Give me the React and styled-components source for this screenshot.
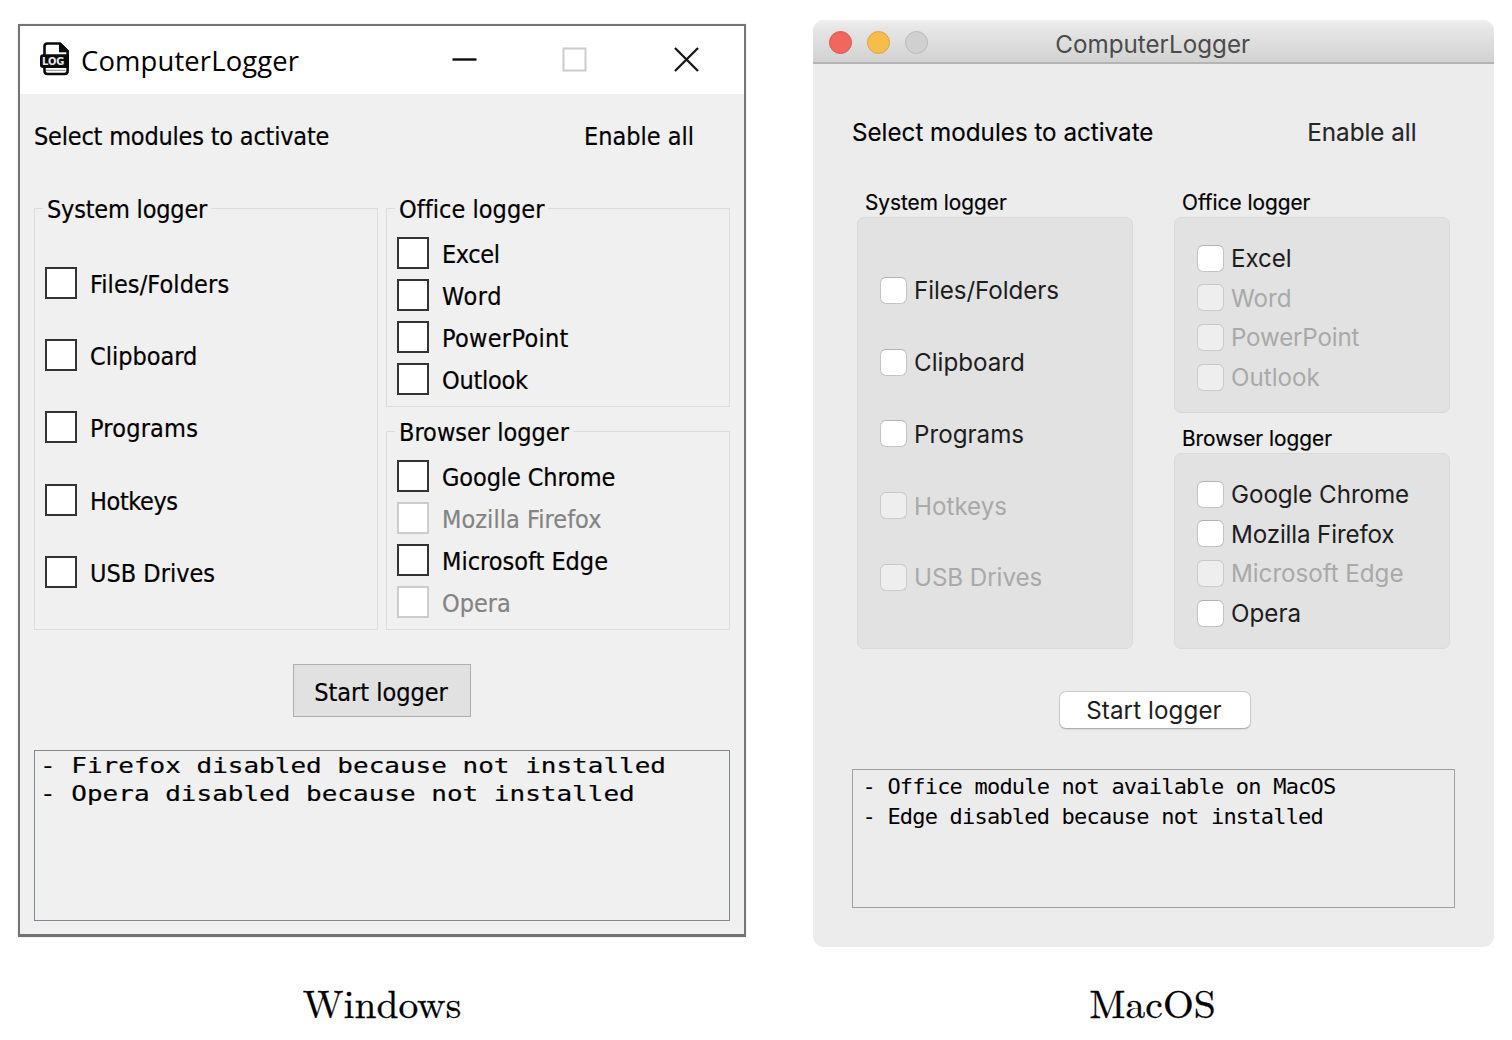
import React from 'react';
import styled, { createGlobalStyle, css } from 'styled-components';

const GlobalStyle = createGlobalStyle`
  *, *::before, *::after { box-sizing: border-box; }
  body { margin: 0; background: #fff; }
`;

const Page = styled.main`
  display: flex;
  align-items: flex-start;
  gap: 67px;
  width: 1512px;
  height: 1040px;
  padding-left: 18px;
  overflow: hidden;
`;

const Figure = styled.figure`
  display: flex;
  flex-direction: column;
  align-items: center;
  margin: 0;
  padding-top: ${(p) => p.$top}px;
`;

const Caption = styled.figcaption`
  margin-top: ${(p) => p.$gap}px;
  padding-right: ${(p) => p.$shift || 0}px;
  font: 39.6px/50px "Latin Modern Roman", "CMU Serif", "Liberation Serif", serif;
  color: #000;
  -webkit-text-stroke: 0.3px #000;
  white-space: nowrap;
`;

const Label = styled.span`
  letter-spacing: ${(p) => p.$track || 0}px;
  white-space: nowrap;
`;

/* ---------- Windows ---------- */

const WinFrame = styled.section`
  width: 728px;
  height: 913px;
  border: 2px solid #747474;
  border-left-width: 2.5px;
  border-bottom-width: 3px;
  background: #f0f0f0;
  color: #000;
  font: 25px/30px "DejaVu Sans Condensed", "DejaVu Sans", sans-serif;
  -webkit-text-stroke: 0.2px currentColor;
  box-shadow: 0 0 2px rgba(0, 0, 0, 0.12);
`;

const WinTitleBar = styled.header`
  display: flex;
  align-items: center;
  height: 68px;
  padding: 0 45px 0 19px;
  background: #fff;
  svg { margin-top: -2px; }
`;

const WinTitle = styled.h1`
  flex: 1;
  margin: 2px 0 0 11px;
  font: 400 27.4px/34px "Open Sans", "Noto Sans", sans-serif;
  letter-spacing: 0.15px;
  -webkit-text-stroke: 0;
`;

const WinControls = styled.div`
  display: flex;
  align-items: center;
  gap: 85px;
  svg { display: block; }
  svg + svg + svg { margin-left: 2px; }
`;

const WinBody = styled.div`
  display: flex;
  flex-direction: column;
  padding: 0 14px;
`;

const WinHeader = styled.div`
  display: flex;
  align-items: center;
  justify-content: space-between;
  height: 86px;
  margin-bottom: 28px;
  padding-right: 36px;
`;

const WinGroups = styled.div`
  display: grid;
  grid-template-columns: 344px 344px;
  gap: 8px;
  height: 422px;
`;

const WinColumn = styled.div`
  display: grid;
  grid-template-rows: 199px 199px;
  gap: 24px;
`;

const WinGroup = styled.section`
  border: 1px solid #dcdcdc;
  padding: 0 8px;
`;

const WinLegend = styled.h2`
  width: fit-content;
  height: 30px;
  margin: -15px 0 ${(p) => (p.$roomy ? 23 : 8)}px;
  padding: 1px 4px 0;
  background: #f0f0f0;
  font: inherit;
`;

const WinRow = styled.label`
  display: flex;
  align-items: center;
  gap: 13px;
  height: ${(p) => (p.$roomy ? 72.2 : 42.15)}px;
  padding-left: 2px;
  color: ${(p) => (p.$off ? '#838383' : '#000')};
  ${Label} { padding-top: 4px; }
`;

const WinBox = styled.span`
  width: 32px;
  height: 32px;
  border: 2px solid ${(p) => (p.$off ? '#cccccc' : '#333333')};
  background: #fff;
`;

const WinButton = styled.button`
  align-self: center;
  width: 178px;
  height: 53px;
  margin: 34px 0 33px;
  padding: 4px 2px 0 0;
  border: 1px solid #adadad;
  background: #e1e1e1;
  color: #000;
  font: inherit;
`;

const WinLog = styled.div`
  height: 171px;
  padding: 1px 5px;
  border: 1px solid #828790;
  overflow: hidden;
`;

const WinLogLine = styled.p`
  width: fit-content;
  margin: 0;
  font: 21.5px/28px "DejaVu Sans Mono", monospace;
  white-space: pre;
  transform: scaleX(1.209);
  transform-origin: 0 50%;
`;

/* ---------- macOS ---------- */

const MacFrame = styled.section`
  width: 681px;
  height: 927px;
  border-radius: 11px;
  background: #ececec;
  color: #000;
  font: 24.2px/30px Inter, sans-serif;
  overflow: hidden;
`;

const MacTitleBar = styled.header`
  display: grid;
  grid-template-columns: 1fr auto 1fr;
  align-items: center;
  height: 44px;
  padding: 3px 17px 0 15.5px;
  border-bottom: 2px solid #b4b4b4;
  background: linear-gradient(#f0f0f0, #e6e6e6 20%, #d2d2d2);
`;

const Lights = styled.div`
  display: flex;
  gap: 15px;
`;

const lightColors = {
  close: css`background: #f0675d; border-color: #dc564c;`,
  minimise: css`background: #f6bd4b; border-color: #e0a33a;`,
  zoom: css`background: #d0d0d0; border-color: #b9b9b9;`,
};

const Light = styled.span`
  width: 23px;
  height: 23px;
  border: 1px solid;
  border-radius: 50%;
  ${(p) => lightColors[p.$kind]}
`;

const MacTitle = styled.h1`
  margin: 0;
  padding-top: 4px;
  color: #4b4b4b;
  font: inherit;
`;

const MacBody = styled.div`
  display: flex;
  flex-direction: column;
  padding: 0 39px;
`;

const MacHeader = styled.div`
  display: flex;
  align-items: center;
  justify-content: space-between;
  height: 84px;
  margin: 27px 0 13px;
  padding-right: 38.5px;
  -webkit-text-stroke: 0.15px currentColor;
`;

const MacEnable = styled.span`
  color: #262626;
`;

const MacGroups = styled.div`
  display: grid;
  grid-template-columns: 276px 276px;
  gap: 41px;
  margin-left: 5px;
`;

const MacColumn = styled.div`
  display: flex;
  flex-direction: column;
`;

const MacLegend = styled.h2`
  height: 29px;
  margin: ${(p) => p.$top || 0}px 0 0;
  padding-left: 8px;
  font: 400 20.8px/29px Inter, sans-serif;
  -webkit-text-stroke: 0.2px currentColor;
`;

const MacGroup = styled.section`
  height: ${(p) => (p.$tall ? 432 : 196)}px;
  padding: ${(p) => (p.$tall ? 36.5 : 20.5)}px 22px 0;
  border: 1px solid #d9d9d9;
  border-radius: 7px;
  background: #e2e2e2;
`;

const MacRow = styled.label`
  display: flex;
  align-items: center;
  gap: 7px;
  height: ${(p) => (p.$roomy ? 71.75 : 39.6)}px;
  color: ${(p) => (p.$off ? '#a9a9a9' : '#1d1d1d')};
  ${Label} { padding-top: 2px; }
`;

const MacBox = styled.span`
  width: 27px;
  height: 27px;
  border: 1px solid ${(p) => (p.$off ? '#cbcbcb' : '#c3c3c3')};
  border-top-color: ${(p) => (p.$off ? '#c6c6c6' : '#b2b2b2')};
  border-radius: 6px;
  background: ${(p) => (p.$off ? '#eeeeee' : '#ffffff')};
`;

const MacButton = styled.button`
  width: 192px;
  height: 38px;
  margin: 42px 0 40px 206.5px;
  padding: 1px 1px 0 0;
  border: 1px solid #c9c9c9;
  border-bottom-color: #b0b0b0;
  border-radius: 7px;
  background: #fff;
  box-shadow: 0 1px 1px rgba(0, 0, 0, 0.08);
  color: #1d1d1d;
  font: inherit;
  letter-spacing: 0.08px;
`;

const MacLog = styled.div`
  height: 139px;
  padding: 2px 9.5px;
  border: 1.5px solid #a0a0a0;
  overflow: hidden;
`;

const MacLogLine = styled.p`
  margin: 0;
  font: 22px/30px "DejaVu Sans Mono", monospace;
  letter-spacing: -0.8px;
  white-space: pre;
`;

/* ---------- Icons ---------- */

const LogIcon = () => (
  <svg width="31" height="34" viewBox="0 0 31 34">
    <path d="M7.500 1.500H21l7.600 7.600V29q0 3-3 3H8.500q-3 0-3-3V4.500q0-3 3-3Z" fill="#fff" stroke="#0a0a0a" strokeWidth="2.600" />
    <path d="M20 1v9.300h9.500V8.500L22 1Z" fill="#0a0a0a" />
    <path d="M4 12.200H30V26H4q-3 0-3-3v-7.800q0-3 3-3Z" fill="#0a0a0a" />
    <path d="M7 28.300H26.500" stroke="#555" strokeWidth="0.700" />
    <text x="3" y="23.200" fill="#e8e8e8" fontFamily="DejaVu Sans, sans-serif" fontWeight="700" fontSize="10.500" textLength="22.500" lengthAdjust="spacingAndGlyphs">LOG</text>
  </svg>
);

const MinimiseIcon = () => (
  <svg width="25" height="25" viewBox="0 0 25 25"><path d="M.5 12.500H24.500" stroke="#0c0c0c" strokeWidth="2.400" /></svg>
);
const MaximiseIcon = () => (
  <svg width="25" height="25" viewBox="0 0 25 25"><rect x="1.500" y="1.500" width="22" height="22" fill="none" stroke="#cccccc" strokeWidth="2" /></svg>
);
const CloseIcon = () => (
  <svg width="25" height="25" viewBox="0 0 25 25"><path d="M1 1L24 24M24 1L1 24" stroke="#16161a" strokeWidth="2.300" /></svg>
);

/* ---------- Data ---------- */

const win = {
  system: [['Files/Folders', 0.1], ['Clipboard'], ['Programs', 0.2], ['Hotkeys', -0.4], ['USB Drives']],
  office: [['Excel', -0.4], ['Word', 0.6], ['PowerPoint', 0.3], ['Outlook', -0.25]],
  browser: [['Google Chrome', -0.1], ['Mozilla Firefox', 0.05, true], ['Microsoft Edge'], ['Opera', 0, true]],
};

const mac = {
  system: [['Files/Folders', -0.08], ['Clipboard'], ['Programs'], ['Hotkeys', 0, true], ['USB Drives', -0.08, true]],
  office: [['Excel', -0.1], ['Word', 0, true], ['PowerPoint', -0.2, true], ['Outlook', 0, true]],
  browser: [['Google Chrome', -0.08], ['Mozilla Firefox', -0.15], ['Microsoft Edge', -0.05, true], ['Opera']],
};

const WinOptions = ({ items, roomy }) =>
  items.map(([name, track, off]) => (
    <WinRow key={name} $roomy={roomy} $off={off}>
      <WinBox $off={off} />
      <Label $track={track}>{name}</Label>
    </WinRow>
  ));

const MacOptions = ({ items, roomy }) =>
  items.map(([name, track, off]) => (
    <MacRow key={name} $roomy={roomy} $off={off}>
      <MacBox $off={off} />
      <Label $track={track}>{name}</Label>
    </MacRow>
  ));

const WindowsWindow = () => (
  <WinFrame>
    <WinTitleBar>
      <LogIcon />
      <WinTitle>ComputerLogger</WinTitle>
      <WinControls>
        <MinimiseIcon />
        <MaximiseIcon />
        <CloseIcon />
      </WinControls>
    </WinTitleBar>
    <WinBody>
      <WinHeader>
        <Label $track={-0.2}>Select modules to activate</Label>
        <Label>Enable all</Label>
      </WinHeader>
      <WinGroups>
        <WinGroup>
          <WinLegend $roomy><Label $track={-0.2}>System logger</Label></WinLegend>
          <WinOptions items={win.system} roomy />
        </WinGroup>
        <WinColumn>
          <WinGroup>
            <WinLegend><Label $track={0.05}>Office logger</Label></WinLegend>
            <WinOptions items={win.office} />
          </WinGroup>
          <WinGroup>
            <WinLegend><Label>Browser logger</Label></WinLegend>
            <WinOptions items={win.browser} />
          </WinGroup>
        </WinColumn>
      </WinGroups>
      <WinButton>Start logger</WinButton>
      <WinLog>
        <WinLogLine>- Firefox disabled because not installed</WinLogLine>
        <WinLogLine>- Opera disabled because not installed</WinLogLine>
      </WinLog>
    </WinBody>
  </WinFrame>
);

const MacWindow = () => (
  <MacFrame>
    <MacTitleBar>
      <Lights>
        <Light $kind="close" />
        <Light $kind="minimise" />
        <Light $kind="zoom" />
      </Lights>
      <MacTitle>ComputerLogger</MacTitle>
    </MacTitleBar>
    <MacBody>
      <MacHeader>
        <Label>Select modules to activate</Label>
        <MacEnable>Enable all</MacEnable>
      </MacHeader>
      <MacGroups>
        <MacColumn>
          <MacLegend>System logger</MacLegend>
          <MacGroup $tall><MacOptions items={mac.system} roomy /></MacGroup>
        </MacColumn>
        <MacColumn>
          <MacLegend>Office logger</MacLegend>
          <MacGroup><MacOptions items={mac.office} /></MacGroup>
          <MacLegend $top={11}>Browser logger</MacLegend>
          <MacGroup><MacOptions items={mac.browser} /></MacGroup>
        </MacColumn>
      </MacGroups>
      <MacButton>Start logger</MacButton>
      <MacLog>
        <MacLogLine>- Office module not available on MacOS</MacLogLine>
        <MacLogLine>- Edge disabled because not installed</MacLogLine>
      </MacLog>
    </MacBody>
  </MacFrame>
);

export default function App() {
  return (
    <>
      <GlobalStyle />
      <Page>
        <Figure $top={24}>
          <WindowsWindow />
          <Caption $gap={39}>Windows</Caption>
        </Figure>
        <Figure $top={20}>
          <MacWindow />
          <Caption $gap={29} $shift={2}>MacOS</Caption>
        </Figure>
      </Page>
    </>
  );
}
